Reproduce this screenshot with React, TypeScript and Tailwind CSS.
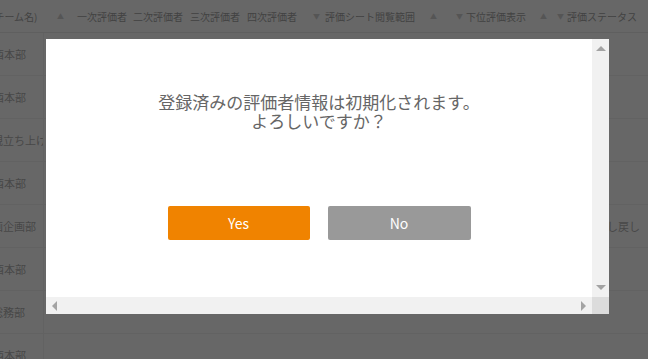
import React from 'react';

const font = { fontFamily: '"Noto Sans CJK JP", "Noto Sans", sans-serif' };

const rows = [
  { label: '西本部', off: '-ml-[7px]' },
  { label: '西本部', off: '-ml-[7px]' },
  { label: '規立ち上げ', off: '-ml-[8px]' },
  { label: '西本部', off: '-ml-[7px]' },
  { label: '画企画部', off: '-ml-[8px]', right: '差し戻し' },
  { label: '西本部', off: '-ml-[7px]' },
  { label: '総務部', off: '-ml-[8px]' },
  { label: '西本部', off: '-ml-[7px]' },
];

function Header() {
  return (
    <div className="flex h-[33px] items-center whitespace-nowrap text-[10px] text-[#424242] border-b border-[#5f5f5f]">
      <span className="-ml-[9px] w-[66px]">(チーム名)</span>
      <span className="w-[20px] text-[7px] text-[#555]">▲</span>
      <span className="w-[56px]">一次評価者</span>
      <span className="w-[57px]">二次評価者</span>
      <span className="w-[57px]">三次評価者</span>
      <span className="w-[66px]">四次評価者</span>
      <span className="w-[12px] text-[7px] text-[#555]">▼</span>
      <span className="w-[105px]">評価シート閲覧範囲</span>
      <span className="w-[26px] text-[7px] text-[#555]">▲</span>
      <span className="w-[10px] text-[7px] text-[#555]">▼</span>
      <span className="w-[74px]">下位評価表示</span>
      <span className="w-[17px] text-[7px] text-[#555]">▲</span>
      <span className="w-[10px] text-[7px] text-[#555]">▼</span>
      <span>評価ステータス</span>
    </div>
  );
}

function ScrollArrow({ dir }: { dir: 'up' | 'down' | 'left' | 'right' }) {
  const pts = {
    up: '0,5 5,0 10,5',
    down: '0,0 5,5 10,0',
    left: '5,0 0,5 5,10',
    right: '0,0 5,5 0,10',
  }[dir];
  const size = dir === 'up' || dir === 'down' ? { w: 10, h: 5 } : { w: 5, h: 10 };
  return (
    <svg width={size.w} height={size.h} viewBox={`0 0 ${size.w} ${size.h}`}>
      <polygon points={pts} fill="#a3a3a3" />
    </svg>
  );
}

export default function App() {
  return (
    <div className="relative w-[648px] h-[359px] overflow-hidden bg-[#676767]" style={font}>
      <Header />
      {rows.map((r, i) => (
        <div key={i} className="flex h-[43px] items-center justify-between border-b border-[#626262] text-[11px] text-[#484848]">
          <div className="w-[44px] h-full flex items-center overflow-hidden border-r border-[#626262]">
            <span className={`${r.off} whitespace-nowrap`}>{r.label}</span>
          </div>
          {r.right && <span className="pr-[8px] whitespace-nowrap">{r.right}</span>}
        </div>
      ))}

      {/* modal */}
      <div className="absolute left-[46px] top-[39px] w-[563px] h-[275px] bg-white flex flex-col">
        <div className="flex flex-1 min-h-0">
          <div className="flex-1 flex flex-col items-center pt-[53px]">
            <p className="text-center text-[17px] leading-[19px] text-[#666]">
              登録済みの評価者情報は初期化されます。
              <br />
              よろしいですか？
            </p>
            <div className="flex gap-[18px] mt-[76px]">
              <button className="w-[142px] h-[34px] rounded-[2px] bg-[#f08300] text-white text-[14px]">Yes</button>
              <button className="w-[143px] h-[34px] rounded-[2px] bg-[#999999] text-white text-[14px]">No</button>
            </div>
          </div>
          <div className="w-[17px] bg-[#f1f1f1] flex flex-col items-center justify-between py-[7px]">
            <ScrollArrow dir="up" />
            <ScrollArrow dir="down" />
          </div>
        </div>
        <div className="flex h-[17px]">
          <div className="flex-1 bg-[#f1f1f1] flex items-center justify-between px-[6px]">
            <ScrollArrow dir="left" />
            <ScrollArrow dir="right" />
          </div>
          <div className="w-[17px] bg-[#dcdcdc]" />
        </div>
      </div>
    </div>
  );
}
